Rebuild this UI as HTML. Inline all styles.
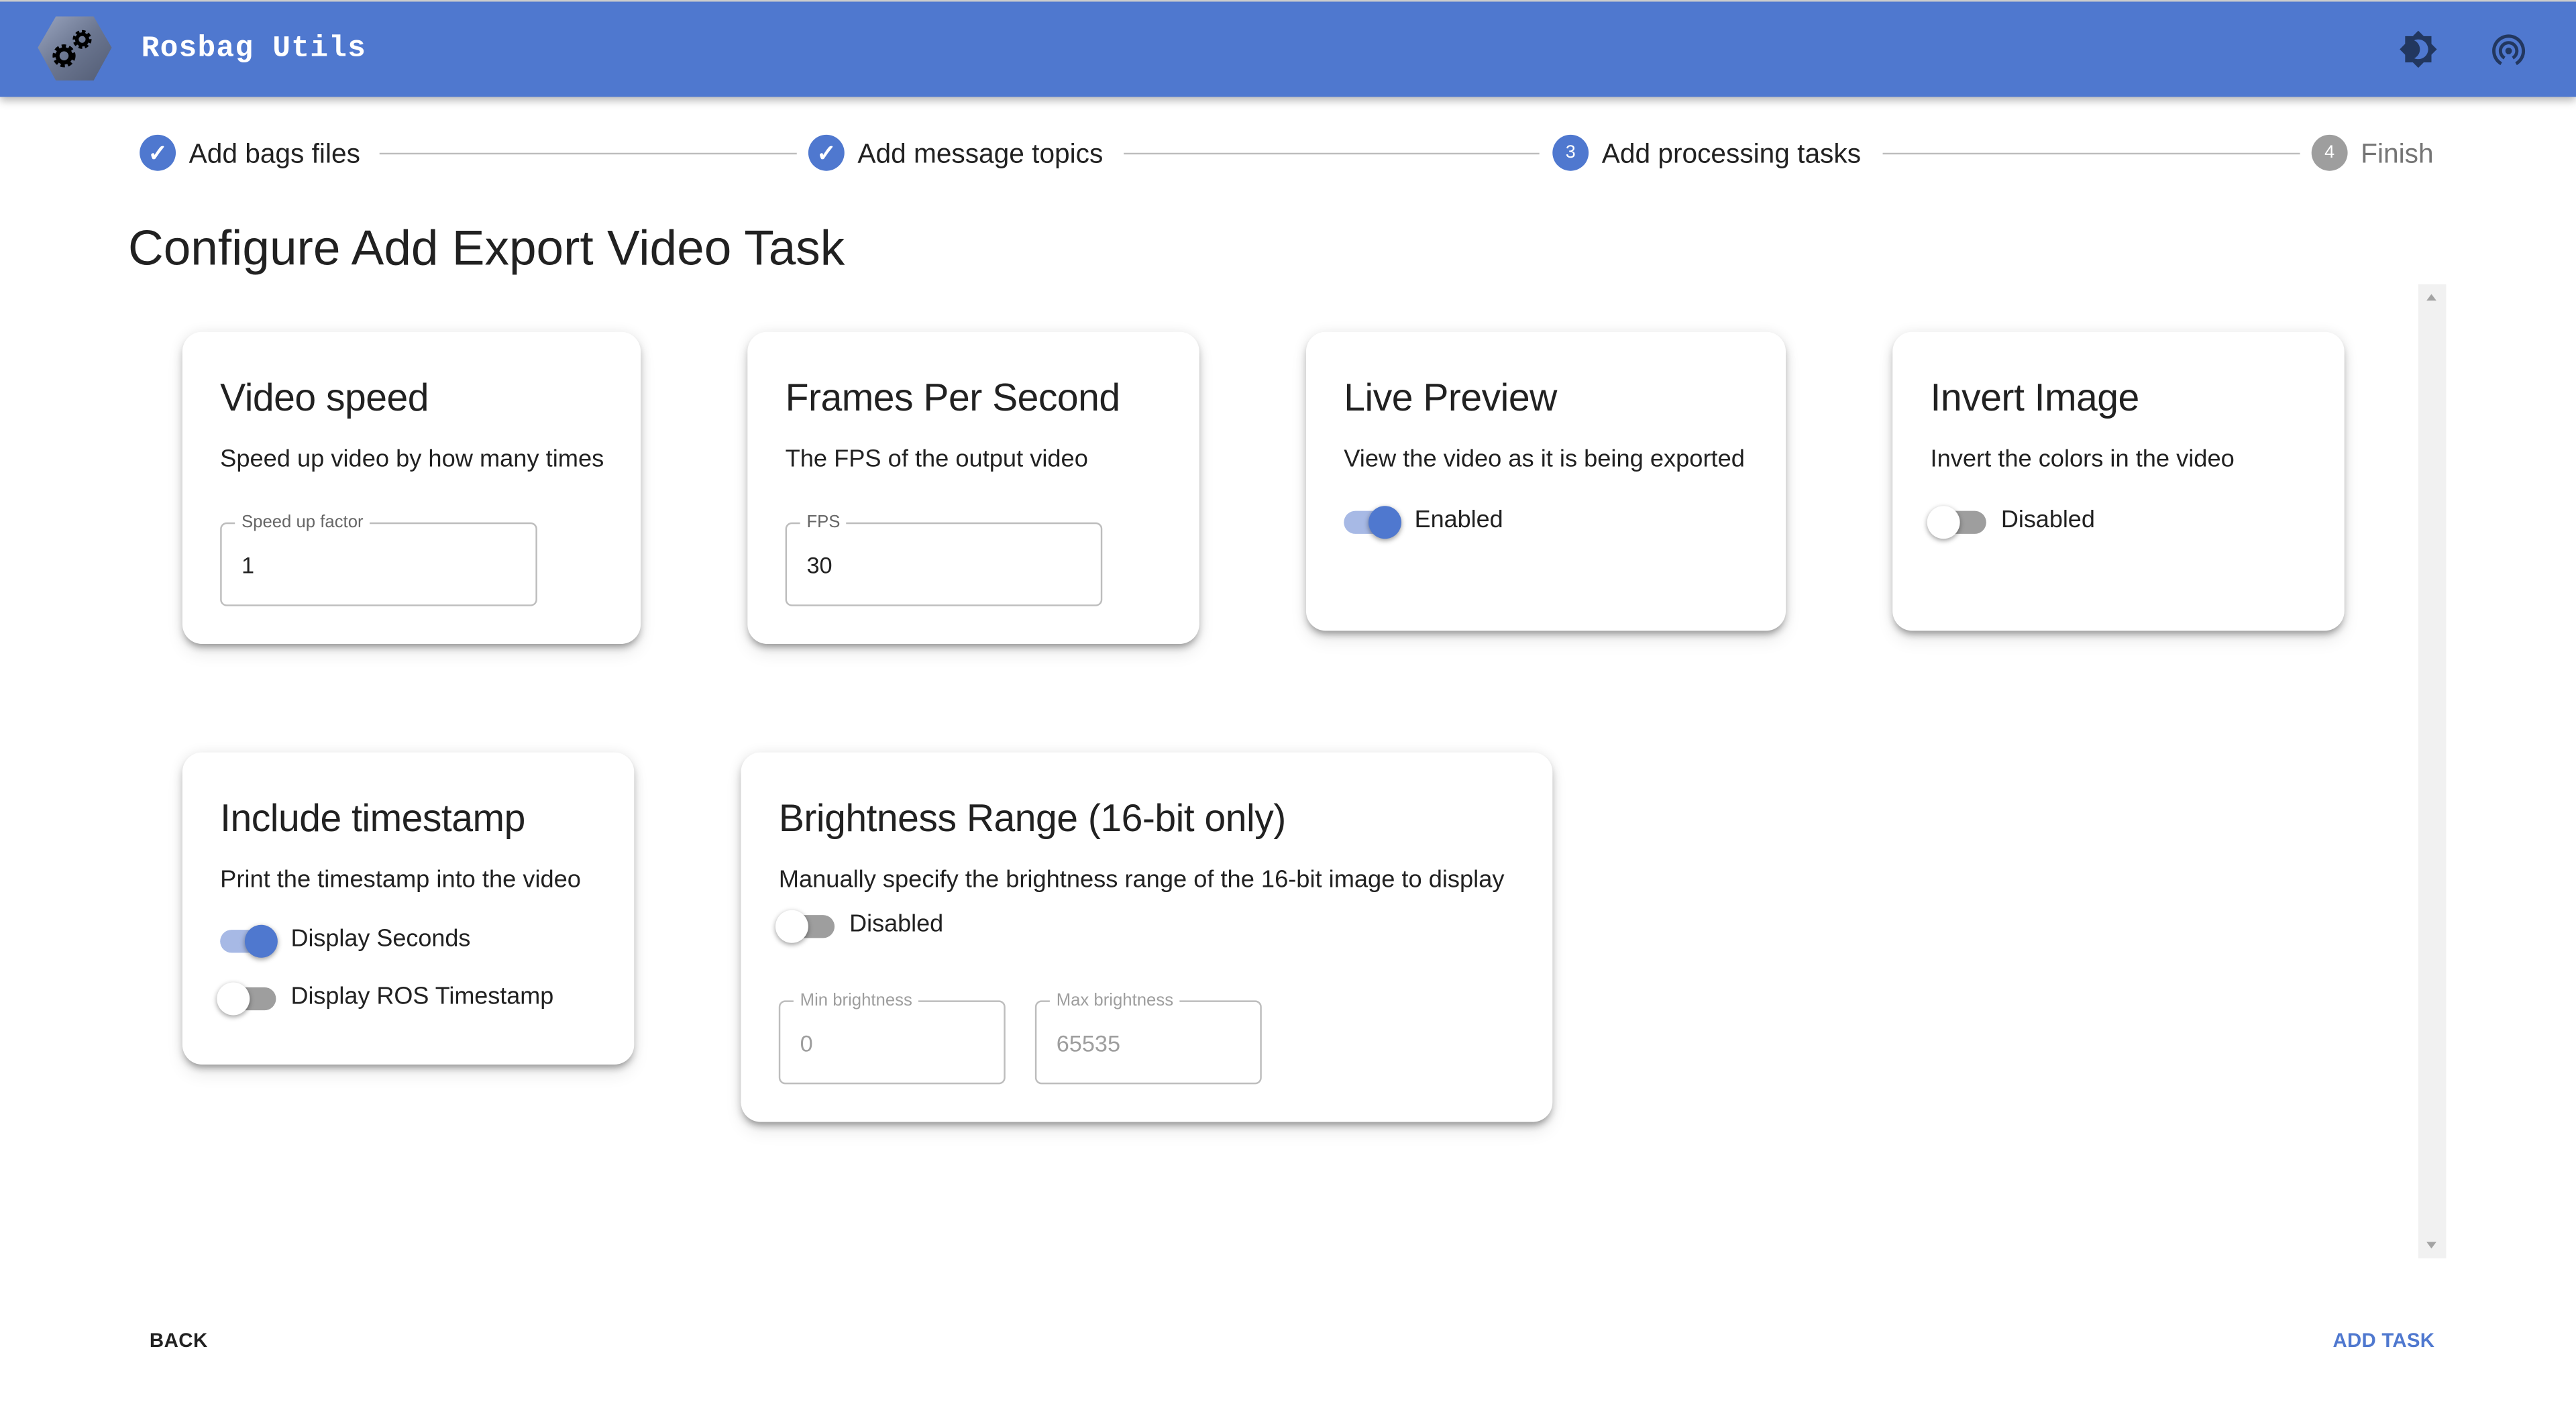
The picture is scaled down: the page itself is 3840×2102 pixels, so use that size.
<!DOCTYPE html>
<html><head><meta charset="utf-8"><style>
html,body{margin:0;padding:0;background:#fff;overflow:hidden;width:3840px;height:2102px}
#w{position:absolute;left:0;top:0;width:1568px;height:858.3px;transform:scale(2.44898);transform-origin:0 0;font-family:"Liberation Sans",sans-serif;color:#212121}
.a{position:absolute}
.hdr{left:0;top:0;width:1568px;height:59px;background:#4f78cf;border-top:1px solid #ccc;box-sizing:border-box;box-shadow:0 2px 5px rgba(0,0,0,.3)}
.step{font-size:16.6px;top:84px;white-space:nowrap}
.circ{width:22px;height:22px;border-radius:50%;background:#4f78cf;color:#fff;font-size:11px;text-align:center;line-height:22px;top:82px}
.ck{font-size:14px;font-weight:bold}
.line{height:1px;background:#bdbdbd;top:93px}
.card{background:#fff;border-radius:12px;box-shadow:0 3px 3px -2px rgba(0,0,0,.2),0 3px 4px rgba(0,0,0,.14),0 1px 8px rgba(0,0,0,.12),0 6px 10px rgba(0,0,0,.08)}
.t{font-size:23.3px;left:23px;top:27px;white-space:nowrap;letter-spacing:-0.2px}
.d{font-size:14.8px;left:23px;top:70px;white-space:nowrap;letter-spacing:0}
.inp{border:1px solid #bdbdbd;border-radius:4px;box-sizing:border-box;height:51px}
.lab{font-size:10.5px;color:#666;background:#fff;padding:0 4px;top:-7px;left:8px;white-space:nowrap}
.val{font-size:14px;left:12px;top:17px}
.tr{width:34px;height:14px;border-radius:7px}
.th{width:20px;height:20px;border-radius:50%;top:-3px;box-shadow:0 1px 3px rgba(0,0,0,.4)}
.tl{font-size:14.7px;white-space:nowrap}
</style></head><body><div id="w">
<div class="a hdr"></div>
<svg class="a" style="left:22px;top:9px" width="47" height="41" viewBox="0 0 47 41">
<defs><linearGradient id="g" x1="0" y1="0" x2="1" y2="1"><stop offset="0" stop-color="#9aa5bf"/><stop offset=".5" stop-color="#6b7690"/><stop offset="1" stop-color="#525c74"/></linearGradient></defs>
<polygon points="12,1 35,1 46,20 35,40 12,40 1,20" fill="url(#g)"/>
<g fill="none" stroke="#000"><circle cx="17" cy="25" r="5" stroke-width="4" stroke-dasharray="2.2 1.5"/><circle cx="17" cy="25" r="4" stroke-width="2.5"/><circle cx="28" cy="15" r="4" stroke-width="3.5" stroke-dasharray="1.8 1.3"/><circle cx="28" cy="15" r="3.2" stroke-width="2.2"/></g>
</svg>
<div class="a" style="left:86px;top:20px;font-family:'Liberation Mono',monospace;font-size:18.2px;color:#fff;font-weight:bold;letter-spacing:0.5px">Rosbag Utils</div>
<svg class="a" style="left:1460px;top:18px" width="24" height="24" viewBox="0 0 24 24"><path fill="#22375f" d="M20 8.69V4h-4.69L12 .69 8.69 4H4v4.69L.69 12 4 15.31V20h4.69L12 23.31 15.31 20H20v-4.69L23.31 12 20 8.69zM12 18c-.89 0-1.74-.2-2.5-.55C11.56 16.5 13 14.420 13 12s-1.44-4.5-3.5-5.45C10.26 6.2 11.11 6 12 6c3.310 0 6 2.69 6 6s-2.69 6-6 6z"/></svg>
<svg class="a" style="left:1515px;top:18px" width="24" height="24" viewBox="0 0 24 24"><path fill="#22375f" d="M12 11c-1.1 0-2 .9-2 2 0 .74.4 1.38 1 1.72V15h2v-.28c.6-.35 1-.98 1-1.720 0-1.1-.9-2-2-2zm6 2c0-3.31-2.69-6-6-6s-6 2.69-6 6c0 2.22 1.21 4.15 3 5.19l1-1.74c-1.19-.7-2-1.97-2-3.45 0-2.21 1.79-4 4-4s4 1.79 4 4c0 1.48-.81 2.75-2 3.45l1 1.74c1.79-1.04 3-2.97 3-5.19zM12 3C6.48 3 2 7.48 2 13c0 3.7 2.01 6.92 4.99 8.65l1-1.73C5.61 18.53 4 15.96 4 13c0-4.42 3.58-8 8-8s8 3.58 8 8c0 2.96-1.61 5.53-4 6.92l1 1.73c2.99-1.73 5-4.95 5-8.65 0-5.52-4.48-10-10-10z"/></svg>

<div class="a circ ck" style="left:85px">✓</div><div class="a step" style="left:115px">Add bags files</div>
<div class="a line" style="left:231px;width:254px"></div>
<div class="a circ ck" style="left:492px">✓</div><div class="a step" style="left:522px">Add message topics</div>
<div class="a line" style="left:684px;width:253px"></div>
<div class="a circ" style="left:945px">3</div><div class="a step" style="left:975px">Add processing tasks</div>
<div class="a line" style="left:1146px;width:254px"></div>
<div class="a circ" style="left:1407px;background:#9e9e9e">4</div><div class="a step" style="left:1437px;color:#757575">Finish</div>

<div class="a" style="left:78px;top:135px;font-size:29.8px;white-space:nowrap">Configure Add Export Video Task</div>

<div class="a" style="left:1472px;top:173px;width:17px;height:593px;background:#f1f1f1"></div>
<div class="a" style="left:1477px;top:179px;width:0;height:0;border-left:3.5px solid transparent;border-right:3.5px solid transparent;border-bottom:4px solid #a3a3a3"></div>
<div class="a" style="left:1477px;top:756px;width:0;height:0;border-left:3.5px solid transparent;border-right:3.5px solid transparent;border-top:4px solid #a3a3a3"></div>

<div class="a card" style="left:111px;top:202px;width:279px;height:190px">
<div class="a t">Video speed</div><div class="a d">Speed up video by how many times</div>
<div class="a inp" style="left:23px;top:116px;width:193px"><div class="a lab">Speed up factor</div><div class="a val">1</div></div></div>

<div class="a card" style="left:455px;top:202px;width:275px;height:190px">
<div class="a t">Frames Per Second</div><div class="a d">The FPS of the output video</div>
<div class="a inp" style="left:23px;top:116px;width:193px"><div class="a lab">FPS</div><div class="a val">30</div></div></div>

<div class="a card" style="left:795px;top:202px;width:292px;height:182px">
<div class="a t">Live Preview</div><div class="a d">View the video as it is being exported</div>
<div class="a tr" style="left:23px;top:109px;background:#a7b9e5"><div class="a th" style="left:15px;background:#4f78cf"></div></div>
<div class="a tl" style="left:66px;top:107px">Enabled</div></div>

<div class="a card" style="left:1152px;top:202px;width:275px;height:182px">
<div class="a t">Invert Image</div><div class="a d">Invert the colors in the video</div>
<div class="a tr" style="left:23px;top:109px;background:#9e9e9e"><div class="a th" style="left:-2px;background:#fff"></div></div>
<div class="a tl" style="left:66px;top:107px">Disabled</div></div>

<div class="a card" style="left:111px;top:458px;width:275px;height:190px">
<div class="a t">Include timestamp</div><div class="a d">Print the timestamp into the video</div>
<div class="a tr" style="left:23px;top:108px;background:#a7b9e5"><div class="a th" style="left:15px;background:#4f78cf"></div></div>
<div class="a tl" style="left:66px;top:106px">Display Seconds</div>
<div class="a tr" style="left:23px;top:143px;background:#9e9e9e"><div class="a th" style="left:-2px;background:#fff"></div></div>
<div class="a tl" style="left:66px;top:141px">Display ROS Timestamp</div></div>

<div class="a card" style="left:451px;top:458px;width:494px;height:225px">
<div class="a t">Brightness Range (16-bit only)</div><div class="a d">Manually specify the brightness range of the 16-bit image to display</div>
<div class="a tr" style="left:23px;top:99px;background:#9e9e9e"><div class="a th" style="left:-2px;background:#fff"></div></div>
<div class="a tl" style="left:66px;top:97px">Disabled</div>
<div class="a inp" style="left:23px;top:151px;width:138px"><div class="a lab" style="color:#9e9e9e">Min brightness</div><div class="a val" style="color:#9e9e9e">0</div></div>
<div class="a inp" style="left:179px;top:151px;width:138px"><div class="a lab" style="color:#9e9e9e">Max brightness</div><div class="a val" style="color:#9e9e9e">65535</div></div></div>

<div class="a" style="left:91px;top:809px;font-size:12px;font-weight:bold;letter-spacing:0.2px">BACK</div>
<div class="a" style="left:1420px;top:809px;font-size:12px;font-weight:bold;color:#4f78cf;letter-spacing:0.1px;white-space:nowrap">ADD TASK</div>
</div></body></html>
